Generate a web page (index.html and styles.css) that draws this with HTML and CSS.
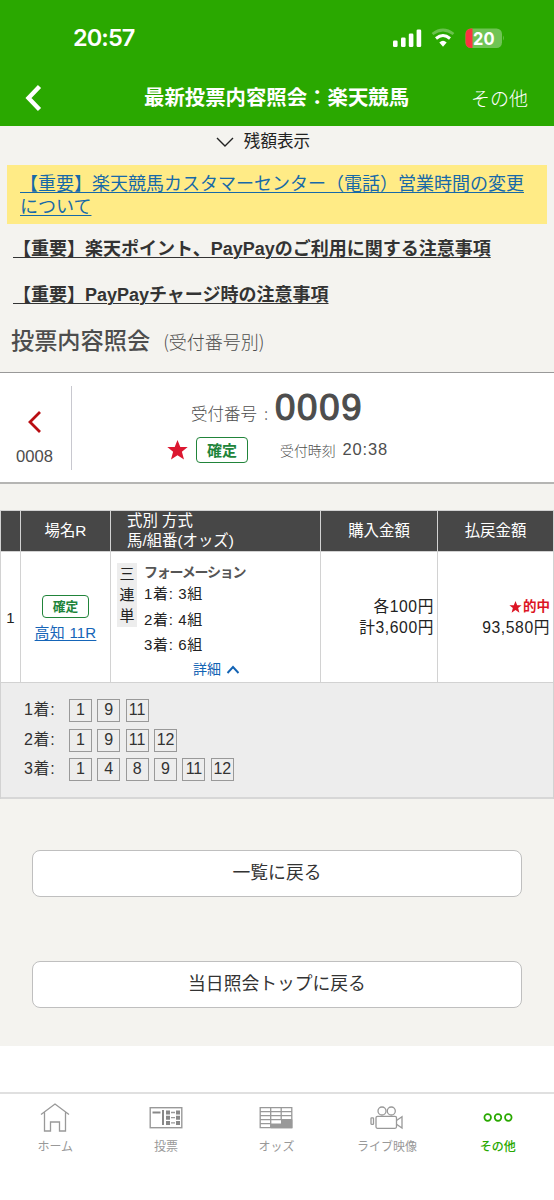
FILE: index.html
```
<!DOCTYPE html>
<html lang="ja">
<head>
<meta charset="utf-8">
<title>最新投票内容照会：楽天競馬</title>
<link rel="stylesheet" href="styles.css">
</head>
<body>
<header class="header">
  <div class="status">
    <span class="clock">20:57</span>
    <svg class="status-icons" width="114" height="24" viewBox="0 0 114 24">
      <g fill="#fff">
        <rect x="3" y="15.500" width="4.600" height="6.500" rx="1.300"/>
        <rect x="11" y="12.500" width="4.600" height="9.500" rx="1.300"/>
        <rect x="18.800" y="8.500" width="4.600" height="13.500" rx="1.300"/>
        <rect x="26.600" y="4.500" width="4.600" height="17.500" rx="1.300"/>
      </g>
      <path d="M42.500 9Q53 1 63.500 9" fill="none" stroke="#fff" stroke-opacity=".3" stroke-width="2.800"/>
      <path d="M46 13.500Q53 7.500 60 13.500" fill="none" stroke="#fff" stroke-width="3"/>
      <path d="M49.300 17.500Q53 14.100 56.700 17.500L53 21.700Z" fill="#fff"/>
      <clipPath id="cell"><rect x="75.500" y="3.500" width="36.500" height="19.500" rx="5.500"/></clipPath>
      <g clip-path="url(#cell)"><rect x="75" y="3" width="38" height="20" fill="#70c455"/><rect x="75" y="3" width="7.500" height="20" fill="#fb3340"/></g>
      <path d="M113 10.500q1.500 2.500 0 5z" fill="#70c455"/>
      <text class="battery" x="83" y="19.500" textLength="21.500" lengthAdjust="spacingAndGlyphs">20</text>
    </svg>
  </div>
  <div class="nav">
    <svg class="back" width="20" height="28" viewBox="0 0 20 28"><path d="M16.500 2.500L5.500 14L16.500 25.500" fill="none" stroke="#fff" stroke-width="4.400"/></svg>
    <h1 class="nav-title">最新投票内容照会：楽天競馬</h1>
    <span class="nav-more">その他</span>
  </div>
</header>
<main class="page">
  <div class="balance"><svg width="18" height="10" viewBox="0 0 18 10"><path d="M1 1L9 9L17 1" fill="none" stroke="#222" stroke-width="1.400"/></svg><span>残額表示</span></div>
  <div class="alert"><a>【重要】楽天競馬カスタマーセンター（電話）営業時間の変更<br>について</a></div>
  <p class="notice"><a>【重要】楽天ポイント、PayPayのご利用に関する注意事項</a></p>
  <p class="notice"><a>【重要】PayPayチャージ時の注意事項</a></p>
  <h2 class="heading">投票内容照会<small>(受付番号別)</small></h2>
  <section class="receipt">
    <div class="previous">
      <svg width="14" height="22" viewBox="0 0 14 22"><path d="M12 1L2 11L12 21" fill="none" stroke="#b90d12" stroke-width="2.800"/></svg>
      <span>0008</span>
    </div>
    <div class="receipt-body">
      <div class="number"><span class="number-label">受付番号<i>:</i></span><strong>0009</strong></div>
      <div class="state">
        <svg width="21" height="20" viewBox="0 0 21 20"><path d="M10.500 0L13.300 7H20.700L14.900 11.700L17 19.500L10.500 15.200L4 19.500L6.100 11.700L.3 7H7.700Z" fill="#dc1730"/></svg>
        <span class="badge badge-large">確定</span>
        <span class="time-label">受付時刻</span><span class="time">20:38</span>
      </div>
    </div>
  </section>
  <section class="bets">
    <div class="row head">
      <div></div><div class="center">場名R</div><div class="types">式別 方式<br>馬/組番(オッズ)</div><div class="center">購入金額</div><div class="center">払戻金額</div>
    </div>
    <div class="row bet">
      <div class="center">1</div>
      <div class="race"><span class="badge">確定</span><a>高知 11R</a></div>
      <div class="bet-detail">
        <div class="kind">三<br>連<br>単</div>
        <div class="formation"><b>フォーメーション</b><span>1着: 3組</span><span>2着: 4組</span><span>3着: 6組</span>
          <a class="toggle">詳細<svg width="14" height="9" viewBox="0 0 14 9"><path d="M1.500 8L7 2L12.500 8" fill="none" stroke="#1363b4" stroke-width="1.900"/></svg></a></div>
      </div>
      <div class="money">各100円<br>計3,600円</div>
      <div class="money"><em><svg width="13" height="12" viewBox="0 0 21 20"><path d="M10.500 0L13.300 7H20.700L14.900 11.700L17 19.500L10.500 15.200L4 19.500L6.100 11.700L.3 7H7.700Z" fill="#dc1424"/></svg>的中</em><br>93,580円</div>
    </div>
    <div class="picks">
      <div class="pick"><span>1着:</span><i>1</i><i>9</i><i>11</i></div>
      <div class="pick"><span>2着:</span><i>1</i><i>9</i><i>11</i><i>12</i></div>
      <div class="pick"><span>3着:</span><i>1</i><i>4</i><i>8</i><i>9</i><i>11</i><i>12</i></div>
    </div>
  </section>
  <div class="actions"><a class="button">一覧に戻る</a><a class="button">当日照会トップに戻る</a></div>
</main>
<nav class="tabs">
  <a class="tab"><svg width="34" height="30" viewBox="0 0 34 30"><path d="M3 11.500L17 1L31 11.500M6.500 9.500V28H12.500V19H21.500V28H27.500V9.500" fill="none" stroke="#999" stroke-width="1.300"/></svg>ホーム</a>
  <a class="tab"><svg width="34" height="30" viewBox="0 0 34 30"><rect x="1.200" y="4.700" width="31.600" height="20" fill="none" stroke="#999" stroke-width="1.400"/><path d="M3.500 9.500H11.500" stroke="#888" stroke-width="2"/><path d="M22 9.500H26M22 14.700H26M22 19.900H26" stroke="#999" stroke-width="1.300"/><path d="M14 7V22" stroke="#888" stroke-width="2"/><path d="M17 7.500h4v4h-4zM27 7.500h4v4h-4zM17 12.700h4v4h-4zM27 12.700h4v4h-4zM17 17.900h4v4h-4zM27 17.900h4v4h-4z" fill="#888"/></svg>投票</a>
  <a class="tab"><svg width="34" height="30" viewBox="0 0 34 30"><path d="M1.200 4.700H32.800V24.700H1.200ZM1.200 8.700H32.800M1.200 12.700H32.800M1.200 16.700H32.800M1.200 20.700H12M11.700 4.700V24.700M22.200 4.700V17" fill="none" stroke="#999" stroke-width="1.300"/><path d="M11.700 20.400H22V16.500H33.400V25.300H11.700Z" fill="#999"/></svg>オッズ</a>
  <a class="tab"><svg width="34" height="30" viewBox="0 0 34 30"><g fill="none" stroke="#999" stroke-width="1.300"><circle cx="12" cy="8" r="4"/><circle cx="21.300" cy="8" r="4"/><rect x="6" y="13.300" width="20.500" height="12" rx="1.500"/><rect x="1" y="14.800" width="2.500" height="6.500" rx=".6"/><path d="M26.500 17.500L32 13.800V25L26.500 21.300"/></g></svg>ライブ映像</a>
  <a class="tab active"><svg width="34" height="30" viewBox="0 0 34 30"><g fill="none" stroke="#29a800" stroke-width="1.700"><circle cx="6.700" cy="14.500" r="3.300"/><circle cx="17" cy="14.500" r="3.300"/><circle cx="27.300" cy="14.500" r="3.300"/></g></svg>その他</a>
</nav>
</body>
</html>
```
FILE: styles.css
```
* { box-sizing: border-box; }
body {
  margin: 0;
  width: 554px;
  height: 1200px;
  overflow: hidden;
  background: #fff;
  color: #333;
  font-family: "Liberation Sans", "Noto Sans CJK JP", sans-serif;
}
h1, h2, p { margin: 0; }
i, em { font-style: normal; }
svg { display: block; flex: none; }

.header { height: 126px; background: #2aa800; color: #fff; }
.status { display: flex; justify-content: space-between; padding: 25px 50px 0 73px; height: 70px; }
.clock { font: 600 23.500px/26px Inter, sans-serif; letter-spacing: -.9px; }
.battery { font: 700 18px Inter, sans-serif; fill: #fff; }
.nav { display: grid; grid-template-columns: 144px 1fr 83px; align-items: center; height: 56px; }
.back { margin-left: 23px; }
.nav-title { font-size: 20.400px; line-height: 28px; font-weight: 700; white-space: nowrap; }
.nav-more { font: 300 19px/28px "Noto Sans CJK JP", sans-serif; }

.page { height: 920px; background: #f4f3ef; }
.balance { display: flex; justify-content: center; align-items: center; gap: 10px; height: 39px; padding: 0 28px 8px 0; padding-left: 0; color: #222; font-size: 16.600px; line-height: 30px; }
.balance { padding-right: 28px; }
.alert { height: 59px; margin: 0 7px; padding: 8px 13px 0; background: #ffeb86; color: #1769a8; font-size: 18px; line-height: 23px; white-space: nowrap; }
.alert a, .notice a { text-decoration: underline; text-underline-offset: 2px; text-decoration-thickness: 1px; }
.notice { height: 46px; padding: 11px 13px 0; font-size: 18px; line-height: 28px; font-weight: 700; white-space: nowrap; }
.heading { display: flex; align-items: baseline; gap: 13px; height: 56px; padding: 6px 0 0 11px; color: #4d4d4d; font: 500 23.200px/34px "Noto Sans CJK JP", sans-serif; }
.heading small { font-size: 18px; font-weight: 300; }

.receipt { display: flex; height: 112px; padding: 13px 0; border-top: 1px solid #999; border-bottom: 2px solid #b5b5b3; background: #fff; color: #4d4d4d; }
.previous { display: flex; flex-direction: column; align-items: center; gap: 14px; width: 72px; height: 84px; padding: 25px 2px 0 0; border-right: 1px solid #c8c8cf; font-size: 16.600px; line-height: 20px; }
.number { display: flex; align-items: baseline; padding-left: 119px; height: 48px; line-height: 43px; }
.number-label { width: 84px; font: 300 16.500px "Noto Sans CJK JP", sans-serif; }
.number-label i { margin-left: 7px; }
.number strong { font-size: 36.500px; font-weight: 400; letter-spacing: 1.800px; -webkit-text-stroke: 1.200px #4d4d4d; }
.state { display: flex; align-items: center; height: 32px; padding-left: 95px; font: 300 13.900px/20px "Noto Sans CJK JP", sans-serif; }
.badge { display: block; width: 47px; height: 23px; border: 1px solid #21843a; border-radius: 4px; background: #fff; color: #21843a; font: 700 12.700px/20px "Noto Sans CJK JP", sans-serif; text-align: center; }
.badge-large { width: 52px; height: 26px; margin: 0 32px 0 8px; font-size: 15px; line-height: 23px; }
.time-label { margin-top: -1px; }
.time { margin: -2px 0 0 7px; font: 16.500px "Liberation Sans", sans-serif; letter-spacing: .8px; }

.bets { margin-top: 26px; border: 1px solid #d2d2d2; border-bottom: 0; font-size: 15px; }
.row { display: grid; grid-template-columns: 20px 90px 210px 117px 115px; }
.row > div { border-right: 1px solid #d2d2d2; border-bottom: 1px solid #d2d2d2; }
.row > div:last-child { border-right: 0; }
.head { height: 41px; background: #474747; color: #fff; line-height: 20px; font-size: 15.400px; }
.center { display: flex; align-items: center; justify-content: center; }
.types { padding-left: 16px; }
.bet { height: 131px; background: #fff; color: #222; }
.race { display: flex; flex-direction: column; align-items: center; gap: 4px; padding-top: 43px; }
.race a { color: #1565b8; text-decoration: underline; text-underline-offset: 2px; letter-spacing: .2px; line-height: 21px; }
.bet-detail { display: flex; padding: 11px 0 0 6px; gap: 7px; }
.kind { width: 20px; height: 64px; background: #ededed; line-height: 21px; text-align: center; }
.formation { display: flex; flex-direction: column; line-height: 25.500px; letter-spacing: .65px; }
.formation b { font-size: 14px; line-height: 18px; color: #555; letter-spacing: -1.250px; }
.toggle { display: flex; align-items: center; gap: 5px; margin-left: 49px; font-size: 14px; line-height: 23px; letter-spacing: 0; color: #1363b4; }
.money { padding: 44px 3px 0 0; font-size: 15.700px; line-height: 21px; letter-spacing: .6px; text-align: right; }
.money em { display: inline-flex; align-items: center; gap: 1px; font-size: 13.500px; font-weight: 700; color: #dc1424; letter-spacing: 0; vertical-align: top; }
.picks { height: 116px; padding: 16px 0 0 23px; border-bottom: 2px solid #d7d7d7; background: #ededed; font-size: 16px; }
.pick { display: flex; gap: 5.400px; height: 29.500px; }
.pick span { width: 39.500px; line-height: 21px; letter-spacing: .7px; }
.pick i { width: 23px; height: 23px; border: 1px solid #999; line-height: 20px; text-align: center; }

.actions { display: flex; flex-direction: column; gap: 64px; padding: 51px 32px 0; }
.button { height: 47px; border: 1px solid #bfbfbf; border-radius: 8px; background: #fff; text-align: center; font-size: 17.800px; line-height: 44px; }

.tabs { display: grid; grid-template-columns: repeat(5, 1fr); margin-top: 46px; height: 108px; border-top: 2px solid #e0e0e0; padding: 9px 1px 0 0; background: #fff; }
.tab { display: flex; flex-direction: column; align-items: center; gap: 3px; color: #999; font: 400 12px/20px "Noto Sans CJK JP", sans-serif; }
.active { color: #29a800; font-weight: 500; }
```
